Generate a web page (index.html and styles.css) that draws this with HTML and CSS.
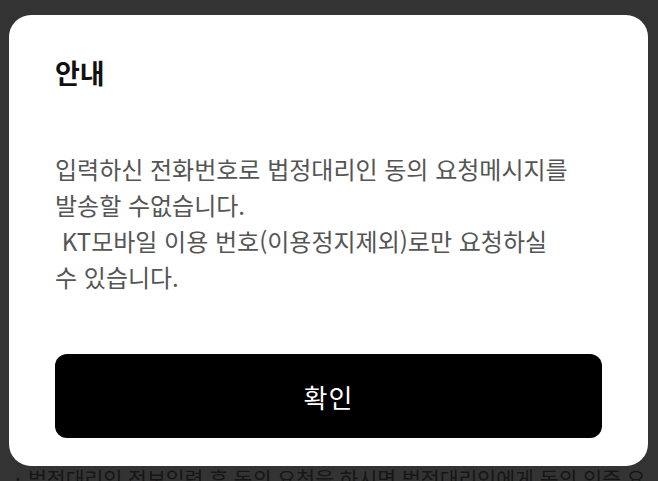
FILE: index.html
```html
<!DOCTYPE html>
<html lang="ko">
<head>
<meta charset="utf-8">
<title>안내</title>
<link rel="stylesheet" href="styles.css">
</head>
<body>
<div class="screen">
  <section class="modal" role="dialog" aria-labelledby="modal-title">
    <h2 class="modal-title" id="modal-title">안내</h2>
    <p class="modal-text">입력하신 전화번호로 법정대리인 동의 요청메시지를 발송할 수없습니다.<br>&nbsp;KT모바일 이용 번호(이용정지제외)로만 요청하실 수 있습니다.</p>
    <button class="modal-btn" type="button">확인</button>
  </section>
  <div class="notice"><span class="bullet">·</span><p class="notice-text">법정대리인 정보입력 후 동의 요청을 하시면 법정대리인에게 동의 인증 요청 메시지가 발송됩니다.</p></div>
</div>
</body>
</html>
```
FILE: styles.css
```css
* { box-sizing: border-box; }
html, body { margin: 0; padding: 0; }
body {
  background: #333333;
  font-family: "Noto Sans CJK KR", "Noto Sans", sans-serif;
}
.screen {
  height: 481px;
  overflow: hidden;
  padding: 15px 10px 0 9px;
}
.modal {
  background: #ffffff;
  border-radius: 22px;
  padding: 40px 46px 28px 46px;
  display: flex;
  flex-direction: column;
}
.modal-title {
  margin: 0;
  font-size: 27px;
  line-height: 36px;
  font-weight: 700;
  color: #111111;
}
.modal-text {
  margin: 60px 0 0 0;
  max-width: 515px;
  font-size: 24px;
  line-height: 36px;
  color: #555555;
  font-weight: 400;
  word-break: keep-all;
}
.modal-btn {
  margin-top: 59px;
  height: 84px;
  border: 0;
  border-radius: 12px;
  background: #000000;
  color: #ffffff;
  font-family: "Noto Sans CJK KR", "Noto Sans", sans-serif;
  font-size: 26px;
  letter-spacing: 1px;
  font-weight: 400;
}
.notice {
  display: flex;
  margin: 0 0 0 6px;
  font-size: 20.5px;
  line-height: 24px;
  color: #161616;
}
.bullet {
  flex: 0 0 13px;
}
.notice-text {
  margin: 0;
  flex: 1;
}
```
